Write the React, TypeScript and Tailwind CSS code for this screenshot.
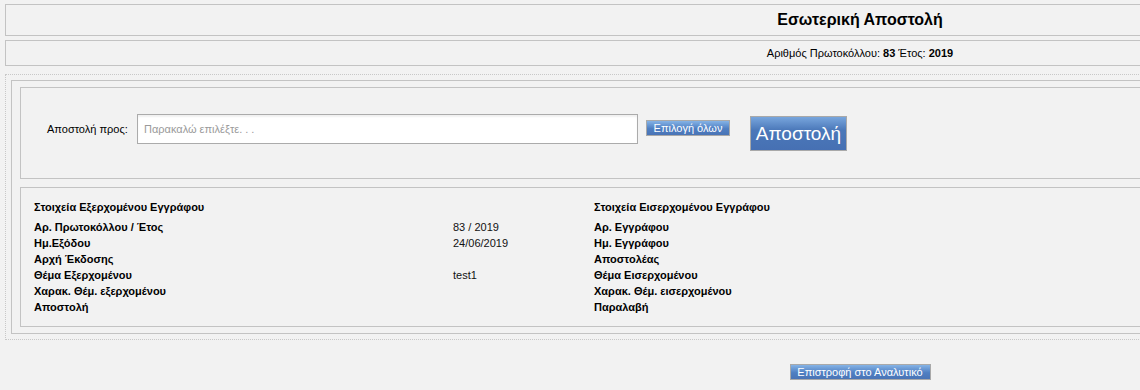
import * as React from "react";

const outgoing = [
  { label: "Αρ. Πρωτοκόλλου / Έτος", value: "83 / 2019", incoming: "Αρ. Εγγράφου" },
  { label: "Ημ.Εξόδου", value: "24/06/2019", incoming: "Ημ. Εγγράφου" },
  { label: "Αρχή Έκδοσης", value: "", incoming: "Αποστολέας" },
  { label: "Θέμα Εξερχομένου", value: "test1", incoming: "Θέμα Εισερχομένου" },
  { label: "Χαρακ. Θέμ. εξερχομένου", value: "", incoming: "Χαρακ. Θέμ. εισερχομένου" },
  { label: "Αποστολή", value: "", incoming: "Παραλαβή" },
];

const App: React.FC = () => {
  return (
    <div
      className="w-full h-[390px] overflow-hidden bg-[#f2f2f2] text-black pt-[4px] pl-[5px]"
      style={{ fontFamily: '"Liberation Sans", Arial, sans-serif' }}
    >
      <div className="w-[1710px]">
        {/* Title */}
        <div className="h-[32px] border border-[#c3c3c3] flex items-center justify-center">
          <h1 className="text-[16px] font-bold leading-none">Εσωτερική Αποστολή</h1>
        </div>

        {/* Protocol number */}
        <div className="mt-[4px] h-[26px] border border-[#c3c3c3] flex items-center justify-center">
          <span className="text-[11px]">
            Αριθμός Πρωτοκόλλου: <b>83</b> Έτος: <b>2019</b>
          </span>
        </div>

        {/* Main form */}
        <div className="mt-[8px] border border-dotted border-[#c8c8c8] p-[5px]">
          <div className="border border-[#c3c3c3] pt-[6px] pb-[6px] pl-[8px]">
            {/* Recipient */}
            <div className="h-[92px] border border-[#c3c3c3] pt-[26px] pl-[26px] flex items-start">
              <label className="w-[90px] text-[11px] leading-[30px]">Αποστολή προς:</label>
              <div className="w-[501px] h-[30px] bg-white border border-[#ababab] shadow-[inset_0_2px_2px_rgba(0,0,0,0.06)] flex items-center pl-[6px]">
                <span className="text-[11px] text-[#9a9a9a]">Παρακαλώ επιλέξτε. . .</span>
              </div>
              <button className="ml-[8px] mt-[6px] w-[84px] h-[16px] border border-[#a9a9a9] bg-[linear-gradient(#85b3e6,#4f7fc2_55%,#4a74b6)] text-white text-[11px] leading-none">
                Επιλογή όλων
              </button>
              <button className="ml-[20px] mt-[2px] w-[97px] h-[35px] border border-[#a9a9a9] bg-[linear-gradient(#78a6dd,#4b78b9_40%,#4670b3)] text-white text-[19px] leading-none">
                Αποστολή
              </button>
            </div>

            {/* Document details */}
            <div className="mt-[8px] h-[140px] border border-[#c3c3c3] pt-[11px] pl-[13px] text-[11px] leading-[16px]">
              <div className="grid grid-cols-[419px_141px_1fr] font-bold mb-[4px]">
                <div className="col-span-2">Στοιχεία Εξερχομένου Εγγράφου</div>
                <div>Στοιχεία Εισερχομένου Εγγράφου</div>
              </div>
              {outgoing.map((row) => (
                <div key={row.label} className="grid grid-cols-[419px_141px_1fr]">
                  <div className="font-bold">{row.label}</div>
                  <div className="text-[#111]">{row.value}</div>
                  <div className="font-bold">{row.incoming}</div>
                </div>
              ))}
            </div>
          </div>
        </div>

        {/* Back */}
        <div className="mt-[24px] flex justify-center">
          <button className="w-[141px] h-[16px] border border-[#a9a9a9] bg-[linear-gradient(#85b3e6,#4f7fc2_55%,#4a74b6)] text-white text-[11px] leading-none">
            Επιστροφή στο Αναλυτικό
          </button>
        </div>
      </div>
    </div>
  );
};

export default App;
